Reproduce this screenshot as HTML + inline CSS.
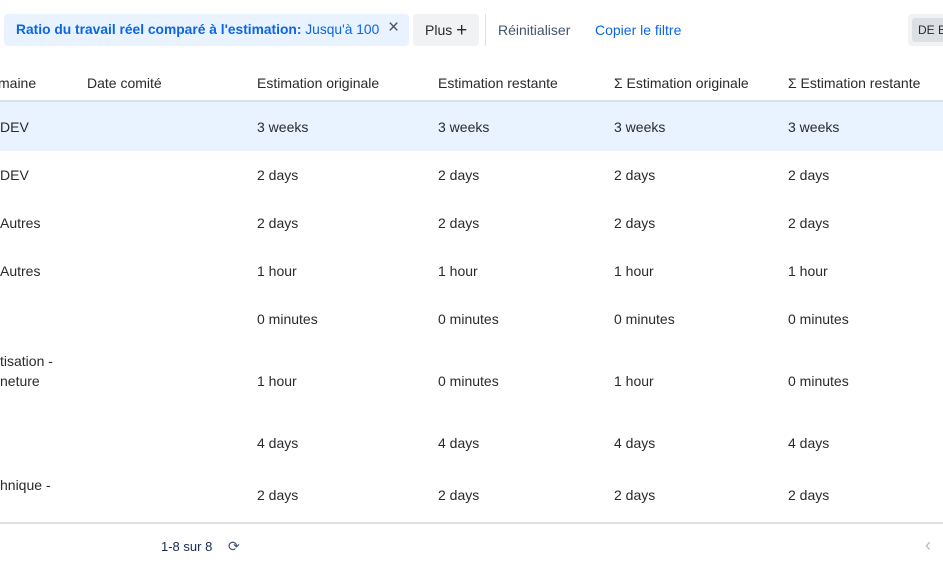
<!DOCTYPE html>
<html><head><meta charset="utf-8"><style>
body{margin:0;width:943px;height:568px;overflow:hidden;background:#fff;font-family:"Liberation Sans",Arial,sans-serif;font-size:14px;color:#292a2e;position:relative}
.a{position:absolute;white-space:nowrap;line-height:16px;margin-top:-1px}
.chip{position:absolute;left:4px;top:14px;width:405px;height:32px;background:#e9f2ff;border-radius:4px}
.plus{position:absolute;left:413px;top:14px;width:66px;height:32px;background:#f1f2f4;border-radius:4px}
.sep{position:absolute;left:485px;top:14px;width:1px;height:32px;background:#dcdfe4}
.de{position:absolute;left:908px;top:14px;width:40px;height:32px;background:#f1f2f4;border-radius:4px}
.de2{position:absolute;left:912px;top:18px;width:40px;height:24px;background:#dcdfe4;border-radius:3px}
.hl{position:absolute;left:0;top:102px;width:943px;height:49px;background:#e9f2ff}
.line{position:absolute;left:0;width:943px;background:#dcdfe4}
</style></head><body>
<div class="chip"></div>
<div class="a" style="left:16px;top:23px;color:#0c66e4;font-size:13.8px"><b>Ratio du travail réel comparé à l'estimation:</b> Jusqu'à 100</div>
<div class="a" style="left:388px;top:21px;color:#44546f;font-size:19px">×</div>
<div class="plus"></div>
<div class="a" style="left:425px;top:23px">Plus <span style="font-size:19px;position:relative;top:1px">+</span></div>
<div class="sep"></div>
<div class="a" style="left:498px;top:23px;color:#44546f">Réinitialiser</div>
<div class="a" style="left:595px;top:23px;color:#0c66e4">Copier le filtre</div>
<div class="de"></div><div class="de2"></div>
<div class="a" style="left:918px;top:23px;font-size:12px">DE B</div>

<div class="a" style="left:-2px;top:76px">maine</div>
<div class="a" style="left:87px;top:76px">Date comité</div>
<div class="a" style="left:257px;top:76px">Estimation originale</div>
<div class="a" style="left:438px;top:76px">Estimation restante</div>
<div class="a" style="left:614px;top:76px">Σ Estimation originale</div>
<div class="a" style="left:788px;top:76px">Σ Estimation restante</div>
<div class="line" style="top:100px;height:2px"></div>
<div class="hl"></div>

<div class="a" style="left:0;top:120px">DEV</div>
<div class="a" style="left:257px;top:120px">3 weeks</div><div class="a" style="left:438px;top:120px">3 weeks</div><div class="a" style="left:614px;top:120px">3 weeks</div><div class="a" style="left:788px;top:120px">3 weeks</div>

<div class="a" style="left:0;top:168px">DEV</div>
<div class="a" style="left:257px;top:168px">2 days</div><div class="a" style="left:438px;top:168px">2 days</div><div class="a" style="left:614px;top:168px">2 days</div><div class="a" style="left:788px;top:168px">2 days</div>

<div class="a" style="left:0;top:216px">Autres</div>
<div class="a" style="left:257px;top:216px">2 days</div><div class="a" style="left:438px;top:216px">2 days</div><div class="a" style="left:614px;top:216px">2 days</div><div class="a" style="left:788px;top:216px">2 days</div>

<div class="a" style="left:0;top:264px">Autres</div>
<div class="a" style="left:257px;top:264px">1 hour</div><div class="a" style="left:438px;top:264px">1 hour</div><div class="a" style="left:614px;top:264px">1 hour</div><div class="a" style="left:788px;top:264px">1 hour</div>

<div class="a" style="left:257px;top:312px">0 minutes</div><div class="a" style="left:438px;top:312px">0 minutes</div><div class="a" style="left:614px;top:312px">0 minutes</div><div class="a" style="left:788px;top:312px">0 minutes</div>

<div class="a" style="left:0;top:354px">tisation -</div>
<div class="a" style="left:0;top:374px">neture</div>
<div class="a" style="left:257px;top:374px">1 hour</div><div class="a" style="left:438px;top:374px">0 minutes</div><div class="a" style="left:614px;top:374px">1 hour</div><div class="a" style="left:788px;top:374px">0 minutes</div>

<div class="a" style="left:257px;top:436px">4 days</div><div class="a" style="left:438px;top:436px">4 days</div><div class="a" style="left:614px;top:436px">4 days</div><div class="a" style="left:788px;top:436px">4 days</div>

<div class="a" style="left:0;top:478px">hnique -</div>
<div class="a" style="left:257px;top:488px">2 days</div><div class="a" style="left:438px;top:488px">2 days</div><div class="a" style="left:614px;top:488px">2 days</div><div class="a" style="left:788px;top:488px">2 days</div>

<div class="line" style="top:522px;height:2px"></div>
<div class="a" style="left:161px;top:540px;font-size:13px;color:#172b4d">1-8 sur 8</div>
<div class="a" style="left:228px;top:539px;font-size:14px;color:#44546f">⟳</div>
<div class="a" style="left:925px;top:538px;font-size:18px;color:#b3b9c4">‹</div>
</body></html>
